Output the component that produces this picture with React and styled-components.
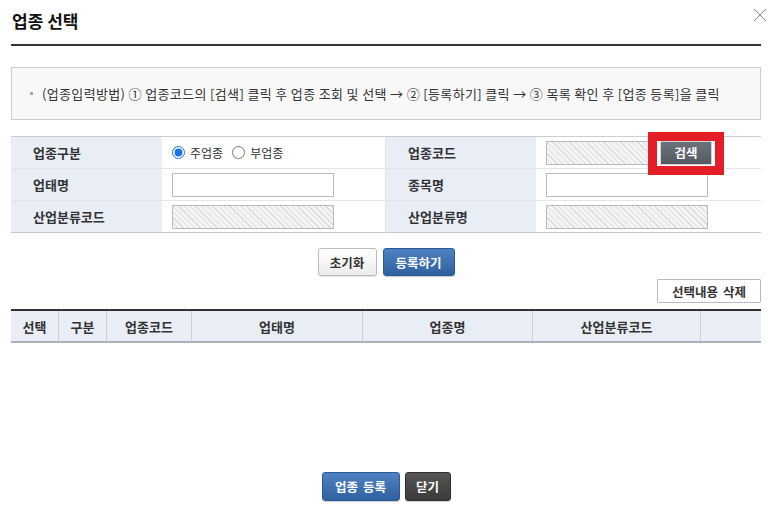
import React from 'react';
import styled, { createGlobalStyle, css } from 'styled-components';

const GlobalStyle = createGlobalStyle`
  html, body {
    margin: 0;
    padding: 0;
    background: #fff;
  }
  body {
    font-family: "Noto Sans CJK KR", "Noto Sans", sans-serif;
    color: #333;
  }
`;

//Popup shell
const Popup = styled('div')`
  width: 776px;
  height: 520px;
  box-sizing: border-box;
  padding: 0 15px 0 11px;
  display: flex;
  flex-direction: column;
`;

const Header = styled('div')`
  height: 44px;
  border-bottom: 2px solid #333;
  display: flex;
  justify-content: space-between;
  align-items: flex-start;
`;

const Title = styled('h1')`
  margin: 0;
  padding-top: 9px;
  padding-left: 1px;
  font-size: 17px;
  line-height: 24px;
  font-weight: bold;
  color: #111;
`;

const CloseButton = styled('button')`
  margin: 8px -6px 0 0;
  padding: 0;
  border: 0;
  background: none;
  width: 14px;
  height: 14px;
  cursor: pointer;
`;

const Guide = styled('div')`
  margin-top: 21px;
  height: 53px;
  box-sizing: border-box;
  border: 1px solid #ccc;
  background: #f8f8f8;
  display: flex;
  align-items: center;
  padding-left: 18px;
  font-size: 13px;
  letter-spacing: 0.35px;
  color: #333;
  white-space: nowrap;
`;

const Bullet = styled('span')`
  width: 3px;
  height: 3px;
  background: #aaa;
  margin-right: 9px;
  flex-shrink: 0;
`;

//Search form
const FormGrid = styled('div')`
  margin-top: 16px;
  display: grid;
  grid-template-columns: 151px 223px 151px 225px;
  border-top: 1px solid #c9ced8;
`;

const Label = styled('div')`
  height: 31px;
  display: flex;
  align-items: center;
  padding-left: 22px;
  background: #e8edf6;
  font-size: 13px;
  font-weight: bold;
  color: #333;
  border-bottom: 1px solid ${props => (props.last ? '#c4c8cf' : '#dfe3ea')};
  border-left: ${props => (props.side ? '1px solid #dfe3ea' : 'none')};
`;

const Field = styled('div')`
  height: 31px;
  display: flex;
  align-items: center;
  padding-left: 10px;
  border-bottom: 1px solid ${props => (props.last ? '#c4c8cf' : '#e6e6e6')};
  font-size: 12px;
`;

const TextInput = styled('input')`
  box-sizing: border-box;
  width: ${props => props.width || 162}px;
  height: 24px;
  border: 1px solid #bbb;
  padding: 0 5px;
  font-family: inherit;
  font-size: 12px;
  background: ${props =>
    props.disabled
      ? 'repeating-linear-gradient(45deg, #f4f4f4 0px, #f4f4f4 3px, #dcdcdc 3px, #dcdcdc 4px)'
      : '#fff'};
`;

const RadioLabel = styled('label')`
  display: flex;
  align-items: center;
  margin-right: 9px;
  color: #333;

  input {
    margin: 0 5px 0 0;
    width: 13px;
    height: 13px;
    accent-color: #1a73e8;
  }
`;

const Highlight = styled('span')`
  position: relative;
  margin-left: 4px;
  display: inline-flex;

  &::after {
    content: '';
    position: absolute;
    top: -9px;
    bottom: -10px;
    left: -12px;
    right: -12px;
    border: 9px solid #e41e26;
    pointer-events: none;
  }
`;

//Buttons
const buttonBase = css`
  box-sizing: border-box;
  font-family: inherit;
  font-weight: bold;
  font-size: 12.5px;
  word-spacing: 2px;
  cursor: pointer;
  padding: 0;
`;

const variants = {
  light: css`
    color: #333;
    border: 1px solid #bbb;
    background: linear-gradient(#fff, #ececec);
    box-shadow: 0 1px 1px rgba(0, 0, 0, 0.12);
  `,
  blue: css`
    color: #fff;
    border: 1px solid #2d5996;
    background: linear-gradient(#4f82c4, #2f619f);
    box-shadow: 0 1px 1px rgba(0, 0, 0, 0.2);
  `,
  dark: css`
    color: #fff;
    border: 1px solid #2e2e2e;
    background: linear-gradient(#555, #3a3a3a);
    box-shadow: 0 1px 1px rgba(0, 0, 0, 0.2);
  `,
  search: css`
    color: #fff;
    border: 1px solid #d0d3d8;
    background: linear-gradient(#6c727b, #555a62);
  `,
  plain: css`
    color: #333;
    border: 1px solid #bbb;
    background: #fff;
  `,
};

const Button = styled('button')`
  ${buttonBase}
  width: ${props => props.width}px;
  height: ${props => props.height || 28}px;
  border-radius: ${props => (props.square ? 1 : 3)}px;
  ${props => variants[props.variant]}
`;

const ButtonRow = styled('div')`
  display: flex;
  justify-content: center;
  gap: ${props => props.gap || 6}px;
  margin-top: ${props => props.top || 0}px;
`;

const RightRow = styled('div')`
  display: flex;
  justify-content: flex-end;
  margin-top: 3px;
`;

//Result list
const ListHead = styled('div')`
  margin-top: 6px;
  display: grid;
  grid-template-columns: 47px 48px 85px 171px 170px 168px 61px;
  border-top: 2px solid #333;
  border-bottom: 2px solid #a9b0bc;
  background: #e9edf5;
`;

const HeadCell = styled('div')`
  height: 30px;
  display: flex;
  align-items: center;
  justify-content: center;
  font-size: 13px;
  font-weight: bold;
  color: #333;
  border-left: ${props => (props.first ? 'none' : '1px solid #c9ced8')};
`;

const ListBody = styled('div')`
  flex: 1;
`;

const Footer = styled('div')`
  padding-bottom: 19px;
`;

const columns = ['선택', '구분', '업종코드', '업태명', '업종명', '산업분류코드', ''];

function App() {
  return (
    <>
      <GlobalStyle />
      <Popup>
        <Header>
          <Title>업종 선택</Title>
          <CloseButton aria-label="닫기">
            <svg width="14" height="14" viewBox="0 0 14 14">
              <path d="M1 1 L13 13 M13 1 L1 13" stroke="#888" strokeWidth="1" />
            </svg>
          </CloseButton>
        </Header>

        <Guide>
          <Bullet />
          (업종입력방법) ① 업종코드의 [검색] 클릭 후 업종 조회 및 선택 → ② [등록하기] 클릭 → ③ 목록 확인 후 [업종 등록]을 클릭
        </Guide>

        <FormGrid>
          <Label>업종구분</Label>
          <Field>
            <RadioLabel>
              <input type="radio" name="kind" defaultChecked />주업종
            </RadioLabel>
            <RadioLabel>
              <input type="radio" name="kind" />부업종
            </RadioLabel>
          </Field>
          <Label side>업종코드</Label>
          <Field>
            <TextInput disabled width={110} />
            <Highlight>
              <Button variant="search" width={52} height={24} square>검색</Button>
            </Highlight>
          </Field>

          <Label>업태명</Label>
          <Field><TextInput /></Field>
          <Label side>종목명</Label>
          <Field><TextInput /></Field>

          <Label last>산업분류코드</Label>
          <Field last><TextInput disabled /></Field>
          <Label last side>산업분류명</Label>
          <Field last><TextInput disabled /></Field>
        </FormGrid>

        <ButtonRow top={15}>
          <Button variant="light" width={59}>초기화</Button>
          <Button variant="blue" width={72}>등록하기</Button>
        </ButtonRow>

        <RightRow>
          <Button variant="plain" width={104} height={24} square>선택내용 삭제</Button>
        </RightRow>

        <ListHead>
          {columns.map((c, i) => (
            <HeadCell key={i} first={i === 0}>{c}</HeadCell>
          ))}
        </ListHead>
        <ListBody />

        <Footer>
          <ButtonRow gap={5}>
            <Button variant="blue" width={78} height={29}>업종 등록</Button>
            <Button variant="dark" width={46} height={29}>닫기</Button>
          </ButtonRow>
        </Footer>
      </Popup>
    </>
  );
}

export default App;
